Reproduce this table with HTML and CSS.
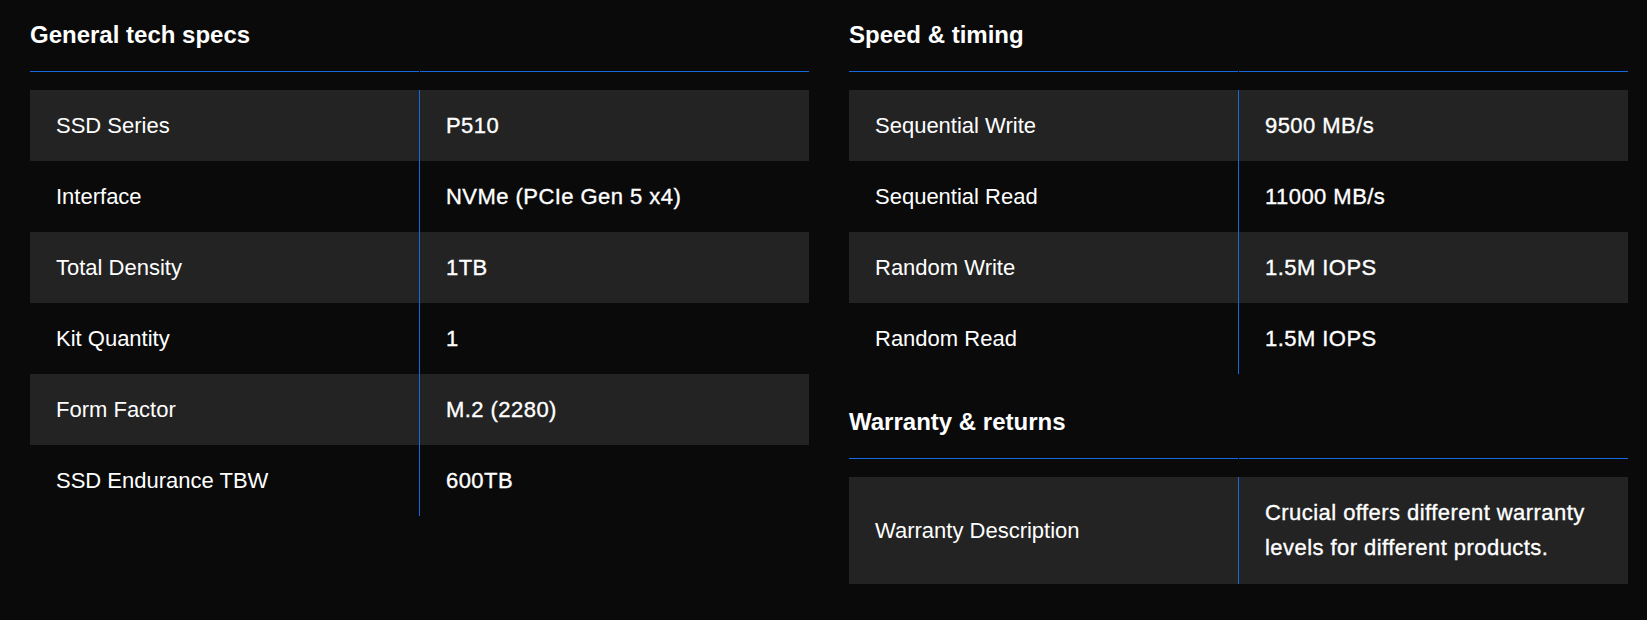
FILE: index.html
```html
<!DOCTYPE html>
<html lang="en">
<head>
<meta charset="utf-8">
<title>Tech specs</title>
<link rel="stylesheet" href="styles.css">
</head>
<body>
<main class="specs">
  <div class="col">
    <section class="spec-section">
      <h2 class="spec-title">General tech specs</h2>
      <div class="spec-rule"><span></span><span></span></div>
      <div class="spec-table">
        <div class="spec-row"><div class="spec-label">SSD Series</div><div class="spec-value">P510</div></div>
        <div class="spec-row"><div class="spec-label">Interface</div><div class="spec-value">NVMe (PCIe Gen 5 x4)</div></div>
        <div class="spec-row"><div class="spec-label">Total Density</div><div class="spec-value">1TB</div></div>
        <div class="spec-row"><div class="spec-label">Kit Quantity</div><div class="spec-value">1</div></div>
        <div class="spec-row"><div class="spec-label">Form Factor</div><div class="spec-value">M.2 (2280)</div></div>
        <div class="spec-row"><div class="spec-label">SSD Endurance TBW</div><div class="spec-value">600TB</div></div>
      </div>
    </section>
  </div>
  <div class="col">
    <section class="spec-section">
      <h2 class="spec-title">Speed &amp; timing</h2>
      <div class="spec-rule"><span></span><span></span></div>
      <div class="spec-table">
        <div class="spec-row"><div class="spec-label">Sequential Write</div><div class="spec-value">9500 MB/s</div></div>
        <div class="spec-row"><div class="spec-label">Sequential Read</div><div class="spec-value">11000 MB/s</div></div>
        <div class="spec-row"><div class="spec-label">Random Write</div><div class="spec-value">1.5M IOPS</div></div>
        <div class="spec-row"><div class="spec-label">Random Read</div><div class="spec-value">1.5M IOPS</div></div>
      </div>
    </section>
    <section class="spec-section">
      <h2 class="spec-title">Warranty &amp; returns</h2>
      <div class="spec-rule"><span></span><span></span></div>
      <div class="spec-table">
        <div class="spec-row spec-row-multi"><div class="spec-label">Warranty Description</div><div class="spec-value">Crucial offers different warranty levels for different products.</div></div>
      </div>
    </section>
  </div>
</main>
</body>
</html>
```

FILE: styles.css
```css
* {
  box-sizing: border-box;
}

html,
body {
  margin: 0;
  background: #0a0a0a;
}

body {
  min-height: 620px;
  font-family: "Liberation Sans", Arial, sans-serif;
  color: #ffffff;
}

.specs {
  display: flex;
  gap: 40px;
  padding-left: 30px;
}

.col {
  width: 779px;
  display: flex;
  flex-direction: column;
  gap: 13px;
}

.spec-section {
  padding-top: 18px;
}

.spec-title {
  margin: 0;
  font-size: 24px;
  font-weight: 700;
  line-height: 33px;
}

.spec-rule {
  display: grid;
  grid-template-columns: 389px 1fr;
  column-gap: 1px;
  margin-top: 20px;
}

.spec-rule span {
  height: 1px;
  background: #1769e0;
}

.spec-table {
  margin-top: 18px;
}

.spec-row {
  display: grid;
  grid-template-columns: 389px 1fr;
  font-size: 22px;
  line-height: 35px;
}

.spec-row:nth-child(odd) {
  background: #232323;
}

.spec-label {
  display: flex;
  align-items: center;
  padding: 18px 26px;
}

.spec-value {
  border-left: 1px solid #1769e0;
  padding: 18px 26px;
  letter-spacing: 0.45px;
  -webkit-text-stroke: 0.35px #ffffff;
}

.spec-row-multi .spec-value {
  padding-bottom: 19px;
}
```
